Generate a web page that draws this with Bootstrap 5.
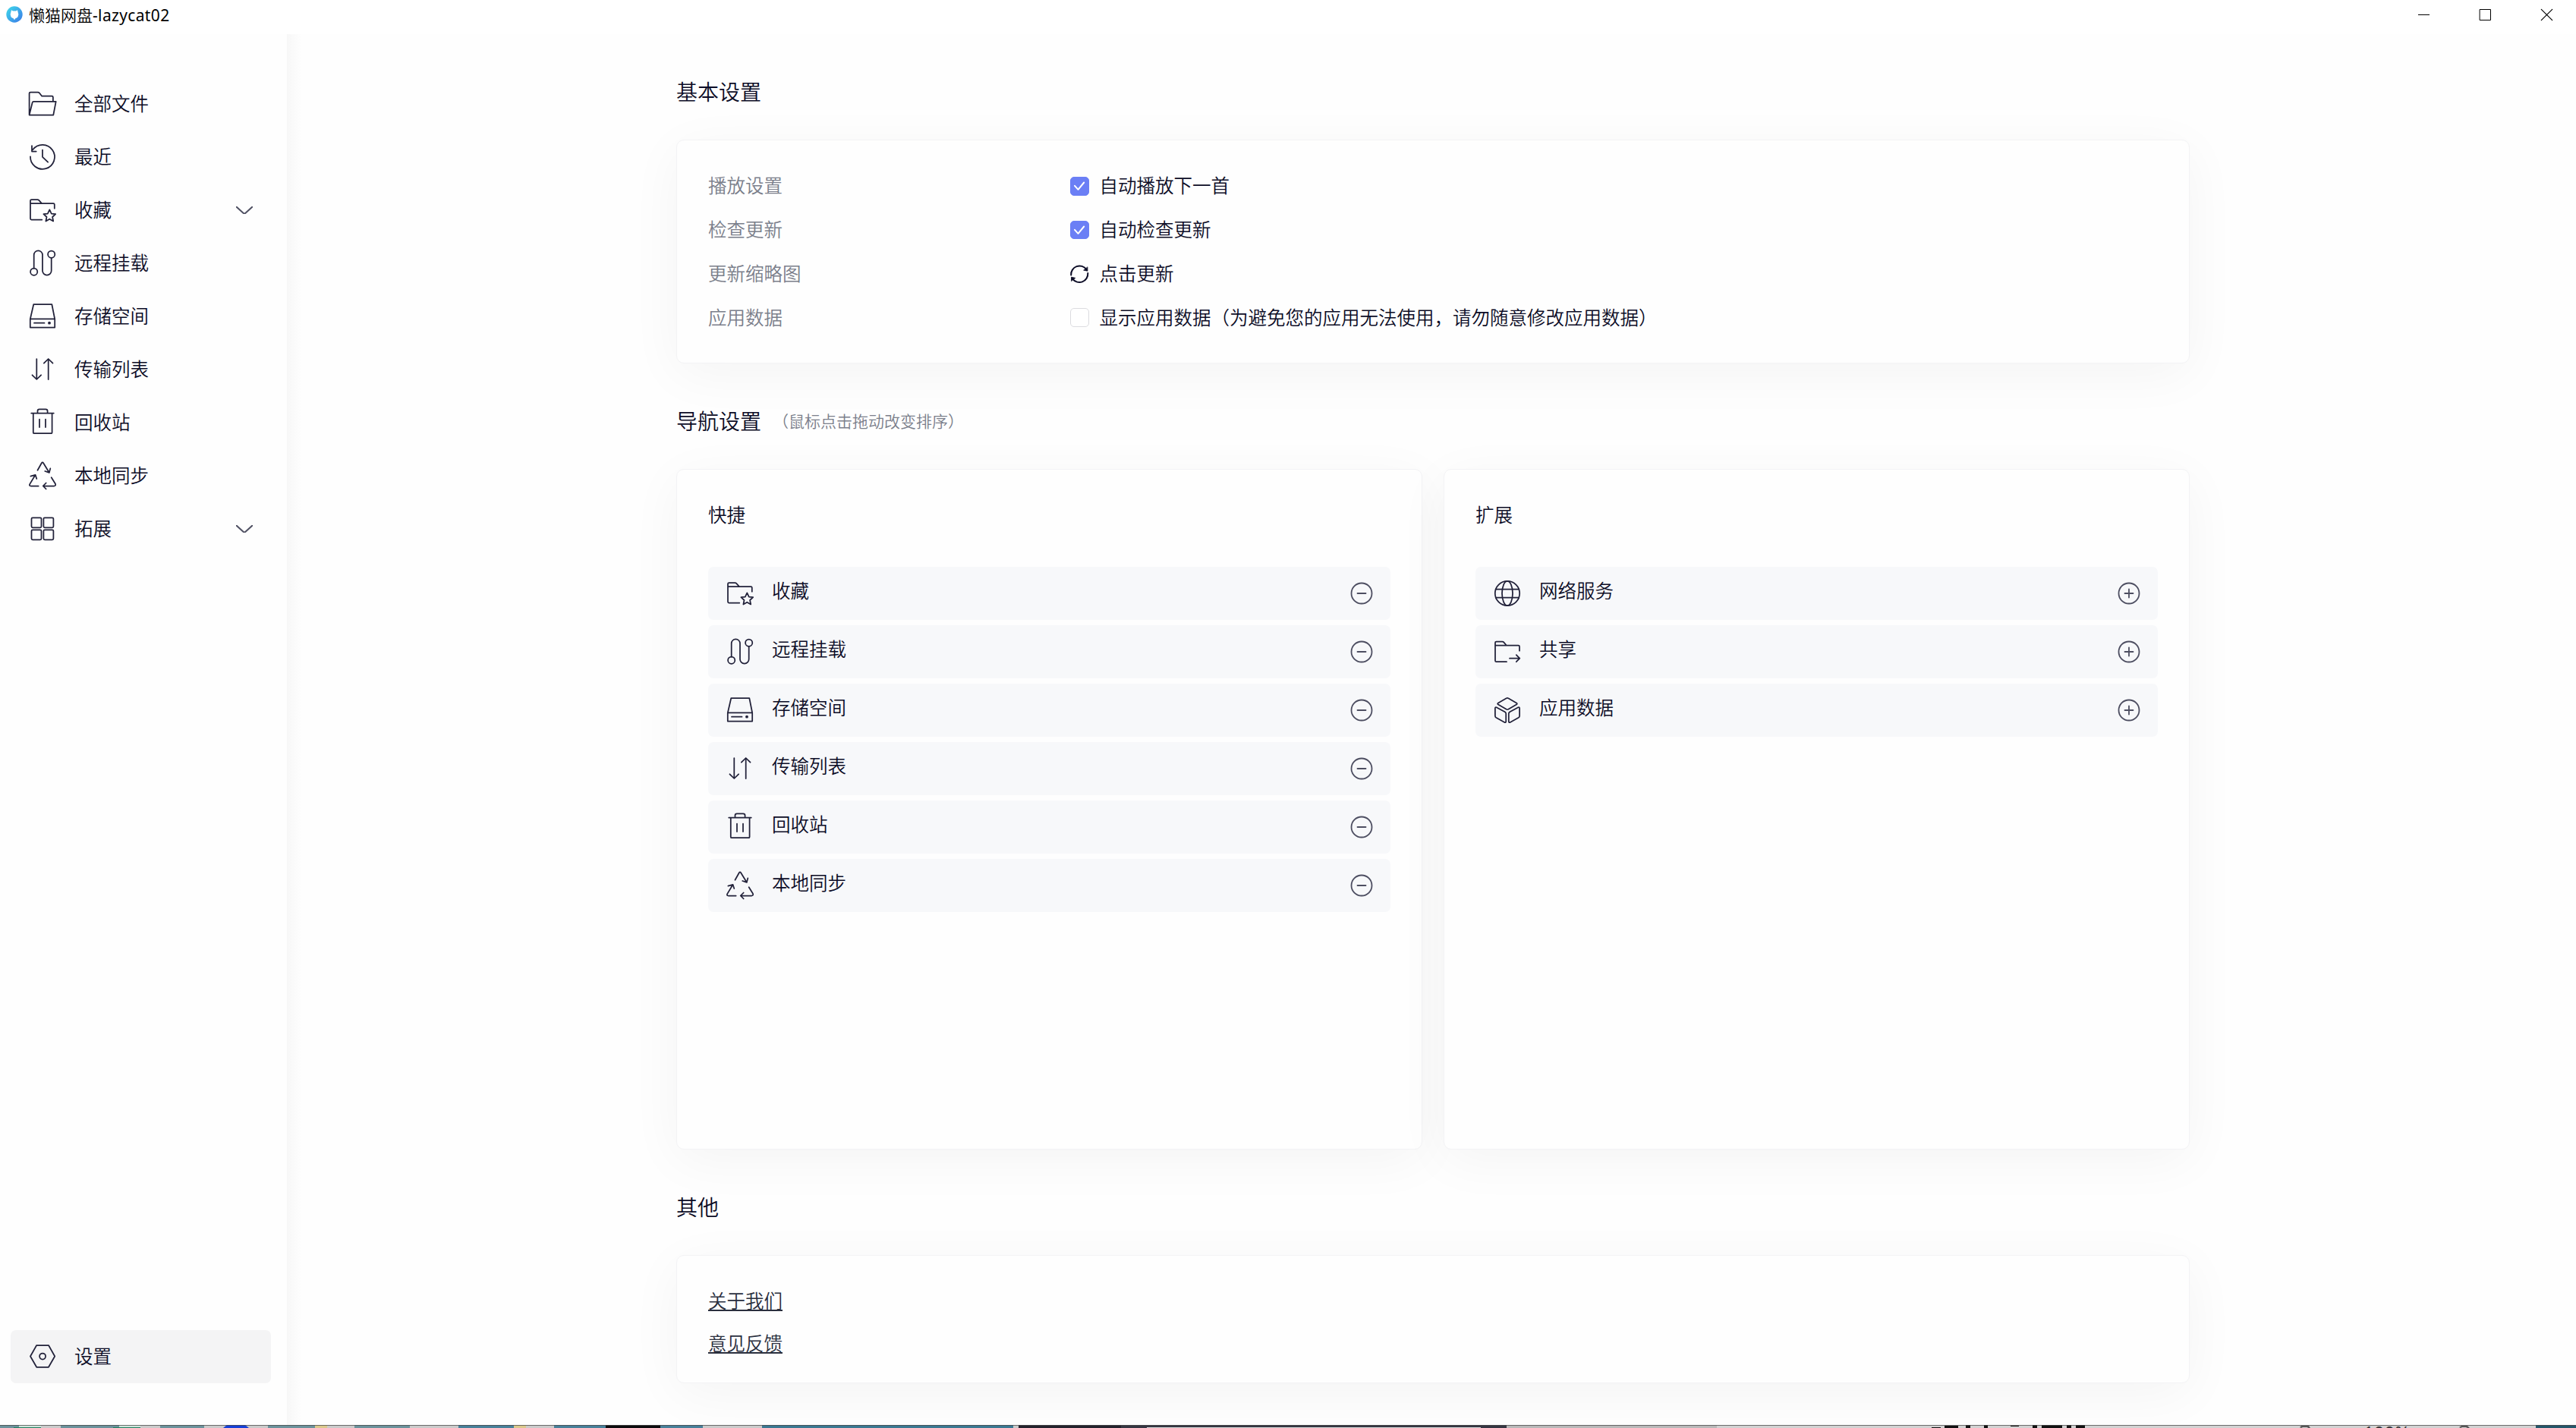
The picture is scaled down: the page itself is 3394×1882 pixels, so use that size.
<!DOCTYPE html>
<html lang="zh-CN">
<head>
<meta charset="utf-8">
<meta name="viewport" content="width=device-width, initial-scale=1">
<title>懒猫网盘-lazycat02</title>
<link href="https://cdn.jsdelivr.net/npm/bootstrap@5.3.0/dist/css/bootstrap.min.css" rel="stylesheet">
<style>
  :root { --ink: #0c0c26; --line: #22223a; --soft: #7b7f8b; }
  body { font-family: "Noto Sans CJK SC", "Noto Sans", sans-serif; font-size: 24.5px; font-weight: 350; line-height: 35px; color: var(--ink); background: #fefefe; }
  svg { display: block; flex: none; overflow: visible; fill: none; stroke: currentColor; stroke-linecap: round; stroke-linejoin: round; }
  .ico { width: 42px; height: 42px; stroke-width: 1.75; color: var(--line); }
  .txt { margin-top: -3px; }

  .titlebar { height: 45px; padding: 0 31px 7px 8px; background: #fff; color: #000; font-size: 21px; line-height: 28px; font-weight: 400; font-family: "Noto Sans", "Noto Sans CJK SC", sans-serif; letter-spacing: .35px; }
  .titlebar .cjk { font-family: "Noto Sans CJK SC", sans-serif; font-weight: 350; letter-spacing: 0; }
  .win-btns { gap: 66px; }

  .app-body { height: 1833px; }
  .side { width: 378px; padding: 56.5px 21px 55px 14px; }
  .side-link { height: 70px; padding: 0 21px; border-radius: 7px; gap: 21px; color: inherit; text-decoration: none; width: 343px; }
  .side-link.active { background: #f4f4f5; }
  .chev { color: #4f5062; stroke-width: 2; margin-right: 3px; }

  .pane { background: linear-gradient(90deg, #f7f7f7 0, #fafafa 8px, #fefefe 20px); padding: 0 509px 0 513px; }
  .head { font-size: 28px; line-height: 42px; margin: 0; font-weight: 350; }
  .hint { font-size: 21px; color: var(--soft); margin-left: 15px; }
  .panel { background: #fefefe; border: 1px solid #f3f3f5; border-radius: 10px; box-shadow: 0 14px 70px rgba(0,0,0,.045); padding: 0 41px; }
  .opt { height: 57.75px; }
  .opt-label { width: 477px; color: var(--soft); }
  .check-box { width: 24.5px; height: 24.5px; border-radius: 5px; border: 1px solid #dcdce0; background: #fff; margin-right: 14px; }
  .check-box.on { background: #6b7ff5; border-color: #6b7ff5; color: #fff; }
  .nav-item-row { height: 70px; border-radius: 7px; background: #f7f8fa; padding: 0 23px 0 21px; margin-bottom: 7px; gap: 21px; }
  .nav-item-row .txt { margin-top: -9px; }
  .round-btn { color: #4d4e61; stroke-width: 1.8; }
  .foot-link { color: #2a2f3e; line-height: 56px; text-decoration: underline; text-decoration-thickness: 2px; text-underline-offset: 2px; text-decoration-skip-ink: none; }
  .foot-link:hover { color: #2a2f3e; }

  .desk { height: 4px; }
  .desk svg { stroke: none; }
  .zoom-text { font: 24px/24px "Noto Sans", sans-serif; fill: #333; }
</style>
<script src="https://cdn.jsdelivr.net/npm/bootstrap@5.3.0/dist/js/bootstrap.bundle.min.js"></script>
</head>
<body class="overflow-hidden">

<svg width="0" height="0" class="position-absolute">
  <symbol id="i-files" viewBox="0 0 42 42"><path d="M3.6 35.3V7q0-1.5 1.5-1.5H15q1 0 1.7.8L20.2 10.700H33.400q1.500 0 1.500 1.500V17.500M3.600 35.500 7.700 19q.3-1.200 1.500-1.200H38.700L35.300 35.500Z"/></symbol>
  <symbol id="i-recent" viewBox="0 0 42 42"><path d="M5 20.300A16 16 0 1 0 8.200 11.200M7 6.200V13.500H12.700M21 11.500V20.800L28.100 27.700"/></symbol>
  <symbol id="i-fav" viewBox="0 0 42 42"><path d="M20.300 33.600H6.500Q5 33.600 5 32.100V8.500Q5 7 6.500 7H14.500Q15.500 7 16.200 7.800L20 12H35.300Q36.800 12 36.800 13.500V18.700M5 12H20M30.300 20.300 32.800 25.600 38.200 26.200 34.100 30 35.200 35.500 30.300 32.700 25.400 35.500 26.500 30 22.400 26.200 27.800 25.600Z"/></symbol>
  <symbol id="i-mount" viewBox="0 0 42 42"><circle cx="9.700" cy="32.200" r="4.600"/><circle cx="32.700" cy="9.200" r="4.600"/><path d="M9.700 27.600V10a5.650 5.650 0 0 1 11.300 0V30.700a5.850 5.850 0 0 0 11.700 0V13.800"/></symbol>
  <symbol id="i-disk" viewBox="0 0 42 42"><path d="M9.300 5H33.300L37.200 24.500V35.500H4.800V24.500ZM4.800 24.300H37.200M10 29.700H23.500"/><circle cx="30" cy="29.700" r="1.900" fill="currentColor" stroke="none"/></symbol>
  <symbol id="i-transfer" viewBox="0 0 42 42"><path d="M13.300 7V33.800M7.500 28.300 13.300 34 19.100 28.300M28.700 34V7.200M22.900 12.700 28.700 7 34.500 12.700"/></symbol>
  <symbol id="i-trash" viewBox="0 0 42 42"><path d="M6.200 8.500H35.800M14.500 8.500V5.700Q14.500 3.300 16.900 3.300H25.200Q27.600 3.300 27.600 5.700V8.500M8.800 8.500V33.900Q8.800 35.200 10.100 35.200H32.300Q33.600 35.200 33.600 33.900V8.500M17 16.500V27M25 16.500V27"/></symbol>
  <symbol id="i-sync" viewBox="0 0 42 42"><path d="M14.500 13.800 19.700 4.500Q21 2.400 22.300 4.500L29.800 16.800M24.300 15 29.900 16.900 31.300 11.400M15.700 34.500H5.500Q3.200 34.300 4.200 32.100L11.500 20M5.300 21.600 11.600 19.800 13.300 25M32.700 23.200 38 31.800Q38.900 34.200 36.500 34.500H21.900M25.700 30.500 21.700 34.500 25.700 38.500"/></symbol>
  <symbol id="i-grid" viewBox="0 0 42 42"><rect x="6.500" y="6.300" width="13" height="13" rx="1.500"/><rect x="22.400" y="6.300" width="13" height="13" rx="1.500"/><rect x="6.500" y="22.300" width="13" height="13" rx="1.500"/><rect x="22.400" y="22.300" width="13" height="13" rx="1.500"/></symbol>
  <symbol id="i-set" viewBox="0 0 42 42"><path d="M13.200 6H29L37.200 20.500 29 34.800H13.200L5 20.500Z"/><circle cx="21.100" cy="20.500" r="4"/></symbol>
  <symbol id="i-globe" viewBox="0 0 42 42"><circle cx="21" cy="21" r="16.200"/><ellipse cx="21" cy="21" rx="7" ry="16.200"/><path d="M5.700 15.700H36.300M5.700 26.700H36.300"/></symbol>
  <symbol id="i-share" viewBox="0 0 42 42"><path d="M20 34.200H6.500Q5 34.200 5 32.700V9Q5 7.500 6.500 7.500H14.500Q15.500 7.500 16.200 8.300L20 12.700H35.500Q37 12.700 37 14.200V19.700M5 12.700H20M24 29.700H37M32.800 25.200 37.300 29.700 32.800 34.200"/></symbol>
  <symbol id="i-cube" viewBox="0 0 42 42"><path d="M19.700 5.300Q21 4.500 22.300 5.300L33 11.400Q34.600 12.500 33 13.600L22.300 19.800Q21 20.500 19.700 19.800L9 13.600Q7.400 12.500 9 11.400ZM4.900 18.300Q5 16.500 6.700 17.300L17.800 23.300Q19.200 24.200 19.200 25.500V35.800Q19 37.800 17.300 36.900L6.200 30.800Q4.900 30 4.900 28.500ZM37.100 18.300Q37 16.500 35.300 17.300L24.200 23.300Q22.800 24.200 22.800 25.500V35.800Q23 37.800 24.700 36.900L35.800 30.800Q37.100 30 37.100 28.500Z"/></symbol>
  <symbol id="i-chev" viewBox="0 0 22 10"><path d="M.7.700 9.500 8.800Q11 10 12.500 8.800L21.300.7"/></symbol>
  <symbol id="i-minus" viewBox="0 0 30 30"><circle cx="15" cy="15" r="13.500"/><path d="M9.500 15H20.500"/></symbol>
  <symbol id="i-plus" viewBox="0 0 30 30"><circle cx="15" cy="15" r="13.500"/><path d="M9.500 15H20.500M15 9.500V20.500"/></symbol>
  <symbol id="i-tick" viewBox="0 0 22 22"><path d="M5 10.800 9.500 15.800 17.200 6.500"/></symbol>
</svg>

<header class="titlebar d-flex align-items-center">
  <svg width="22" height="22" viewBox="0 0 22 22">
    <defs><linearGradient id="lg" x1="0" y1="0" x2="1" y2="1"><stop offset="0" stop-color="#3fdcea"/><stop offset="1" stop-color="#3b78e8"/></linearGradient></defs>
    <circle cx="11" cy="11" r="10.700" fill="url(#lg)" stroke="none"/>
    <path d="M7 5.200 9 6.600Q11 6.200 13 6.600L15 5.200 15.700 8.300Q17.300 11.500 15.500 14.200 14.300 15.900 12.300 16.300L11.500 17.800H10.500L9.700 16.300Q7.700 15.900 6.500 14.200 4.700 11.500 6.300 8.300Z" fill="#fff" stroke="none"/>
  </svg>
  <div class="ms-2"><span class="cjk">懒猫网盘</span>-lazycat02</div>
  <div class="win-btns d-flex ms-auto">
    <svg width="15" height="15" viewBox="0 0 15 15"><path d="M0 7.500H15" stroke-linecap="butt"/></svg>
    <svg width="15" height="15" viewBox="0 0 15 15"><rect x=".5" y=".5" width="14" height="14"/></svg>
    <svg width="15" height="15" viewBox="0 0 15 15"><path d="M.3.300 14.700 14.700M14.700.300.300 14.700" stroke-width="1.200"/></svg>
  </div>
</header>

<div class="app-body d-flex">
  <nav class="side d-flex flex-column flex-shrink-0">
    <a class="side-link d-flex align-items-center"><svg class="ico"><use href="#i-files"/></svg><span class="txt">全部文件</span></a>
    <a class="side-link d-flex align-items-center"><svg class="ico"><use href="#i-recent"/></svg><span class="txt">最近</span></a>
    <a class="side-link d-flex align-items-center"><svg class="ico"><use href="#i-fav"/></svg><span class="txt">收藏</span><svg class="chev ms-auto" width="22" height="10"><use href="#i-chev"/></svg></a>
    <a class="side-link d-flex align-items-center"><svg class="ico"><use href="#i-mount"/></svg><span class="txt">远程挂载</span></a>
    <a class="side-link d-flex align-items-center"><svg class="ico"><use href="#i-disk"/></svg><span class="txt">存储空间</span></a>
    <a class="side-link d-flex align-items-center"><svg class="ico"><use href="#i-transfer"/></svg><span class="txt">传输列表</span></a>
    <a class="side-link d-flex align-items-center"><svg class="ico"><use href="#i-trash"/></svg><span class="txt">回收站</span></a>
    <a class="side-link d-flex align-items-center"><svg class="ico"><use href="#i-sync"/></svg><span class="txt">本地同步</span></a>
    <a class="side-link d-flex align-items-center"><svg class="ico"><use href="#i-grid"/></svg><span class="txt">拓展</span><svg class="chev ms-auto" width="22" height="10"><use href="#i-chev"/></svg></a>
    <a class="side-link active d-flex align-items-center mt-auto"><svg class="ico"><use href="#i-set"/></svg><span class="txt">设置</span></a>
  </nav>

  <main class="pane flex-grow-1 overflow-hidden">
    <h2 class="head" style="padding-top:54px">基本设置</h2>
    <section class="panel" style="margin-top:43px;height:295px;padding-top:31.5px">
      <div class="opt d-flex align-items-center"><span class="opt-label txt">播放设置</span><span class="check-box on d-flex align-items-center justify-content-center"><svg width="22" height="22" stroke-width="2"><use href="#i-tick"/></svg></span><span class="txt">自动播放下一首</span></div>
      <div class="opt d-flex align-items-center"><span class="opt-label txt">检查更新</span><span class="check-box on d-flex align-items-center justify-content-center"><svg width="22" height="22" stroke-width="2"><use href="#i-tick"/></svg></span><span class="txt">自动检查更新</span></div>
      <div class="opt d-flex align-items-center"><span class="opt-label txt">更新缩略图</span>
        <svg width="24.500" height="24.500" viewBox="0 0 24.500 24.500" stroke-width="2" style="margin-right:14px"><path d="M1.200 13.500A11.200 11.200 0 0 1 21.400 6M23.300 11A11.200 11.200 0 0 1 3.200 18.600"/><path d="M22.900 3.200V8.200L18 7.200ZM1.500 21.200V16.200L6.500 17.300Z" fill="currentColor" stroke-width=".8"/></svg>
        <span class="txt">点击更新</span></div>
      <div class="opt d-flex align-items-center"><span class="opt-label txt">应用数据</span><span class="check-box"></span><span class="txt">显示应用数据（为避免您的应用无法使用，请勿随意修改应用数据）</span></div>
    </section>

    <h2 class="head d-flex align-items-center" style="margin-top:54px">导航设置<span class="hint">（鼠标点击拖动改变排序）</span></h2>
    <div class="d-flex" style="gap:28px;margin-top:43px">
      <section class="panel flex-fill w-50" style="height:897px;padding-top:41px">
        <div style="margin-bottom:52px">快捷</div>
        <div class="nav-item-row d-flex align-items-center"><svg class="ico"><use href="#i-fav"/></svg><span class="txt">收藏</span><svg class="round-btn ms-auto" width="30" height="30"><use href="#i-minus"/></svg></div>
        <div class="nav-item-row d-flex align-items-center"><svg class="ico"><use href="#i-mount"/></svg><span class="txt">远程挂载</span><svg class="round-btn ms-auto" width="30" height="30"><use href="#i-minus"/></svg></div>
        <div class="nav-item-row d-flex align-items-center"><svg class="ico"><use href="#i-disk"/></svg><span class="txt">存储空间</span><svg class="round-btn ms-auto" width="30" height="30"><use href="#i-minus"/></svg></div>
        <div class="nav-item-row d-flex align-items-center"><svg class="ico"><use href="#i-transfer"/></svg><span class="txt">传输列表</span><svg class="round-btn ms-auto" width="30" height="30"><use href="#i-minus"/></svg></div>
        <div class="nav-item-row d-flex align-items-center"><svg class="ico"><use href="#i-trash"/></svg><span class="txt">回收站</span><svg class="round-btn ms-auto" width="30" height="30"><use href="#i-minus"/></svg></div>
        <div class="nav-item-row d-flex align-items-center"><svg class="ico"><use href="#i-sync"/></svg><span class="txt">本地同步</span><svg class="round-btn ms-auto" width="30" height="30"><use href="#i-minus"/></svg></div>
      </section>
      <section class="panel flex-fill w-50" style="height:897px;padding-top:41px">
        <div style="margin-bottom:52px">扩展</div>
        <div class="nav-item-row d-flex align-items-center"><svg class="ico"><use href="#i-globe"/></svg><span class="txt">网络服务</span><svg class="round-btn ms-auto" width="30" height="30"><use href="#i-plus"/></svg></div>
        <div class="nav-item-row d-flex align-items-center"><svg class="ico"><use href="#i-share"/></svg><span class="txt">共享</span><svg class="round-btn ms-auto" width="30" height="30"><use href="#i-plus"/></svg></div>
        <div class="nav-item-row d-flex align-items-center"><svg class="ico"><use href="#i-cube"/></svg><span class="txt">应用数据</span><svg class="round-btn ms-auto" width="30" height="30"><use href="#i-plus"/></svg></div>
      </section>
    </div>

    <h2 class="head" style="margin-top:54px">其他</h2>
    <section class="panel d-flex flex-column align-items-start" style="margin-top:43px;height:169px;padding-top:30.500px">
      <a class="foot-link">关于我们</a>
      <a class="foot-link">意见反馈</a>
    </section>
  </main>
</div>

<footer class="desk overflow-hidden">
  <svg width="3394" height="4" viewBox="0 0 3394 4" style="overflow:hidden">
    <rect width="3394" height="4" fill="#6b929c"/>
    <path fill="#cfe6dc" d="M25 0h29v4H25zM157 0h28v4h-28z"/>
    <path fill="#1f8060" d="M18 3h36v1H18zM149 3h36v1h-36z"/>
    <path fill="#cbcbcb" d="M54 0h26v4H54zM185 0h26v4h-26zM269 0h84v4h-84zM431 0h36v4h-36zM540 0h64v4h-64zM690 0h40v4h-40zM926 0h78v4h-78zM1335 0h7v4h-7z"/>
    <path fill="#1540d8" d="M299 0h24l5 4h-34z"/>
    <path fill="#dcc98c" d="M415 0h16v4h-16zM677 0h16v4h-16z"/>
    <path fill="#47809a" d="M604 0h73v4h-73zM730 0h68v4h-68zM870 0h56v4h-56z"/>
    <path fill="#3a7892" d="M1004 0h331v4h-331z"/>
    <path fill="#0c0c0e" d="M798 0h72v4h-72z"/>
    <path fill="#23222c" d="M1342 0h135v4h-135z"/>
    <path fill="#353642" d="M1477 0h508v4h-508z"/>
    <path fill="#d8d8d8" d="M1511 3h440v1h-440z"/>
    <path fill="#b9b9b9" d="M1985 0h277v4h-277z"/>
    <path fill="#d2d2d2" d="M2262 0h1079v4H2262z"/>
    <path fill="#111" d="M2562 1h18v3h-18zM2590 0h6v4h-6zM2614 0h5v4h-5zM2545 3h12v1h-12zM2678 0h6v4h-6zM2690 0h27v4h-27zM2723 0h6v4h-6zM2735 0h12v4h-12zM2649 1h11v1h-11z"/>
    <path fill="#555" d="M3030 3l2-2h10l2 3h-3l-1-1h-6l-2 1zM3240 3l3-2h8l3 3h-3l-2-1h-5l-2 1z"/>
    <path fill="#24566a" d="M3341 0h53v4h-53z"/>
    <text class="zoom-text" x="3114" y="19">100%</text>
    <path fill="#4a4a4a" opacity=".75" d="M0 0h3394v1H0z"/>
  </svg>
</footer>
</body>
</html>
